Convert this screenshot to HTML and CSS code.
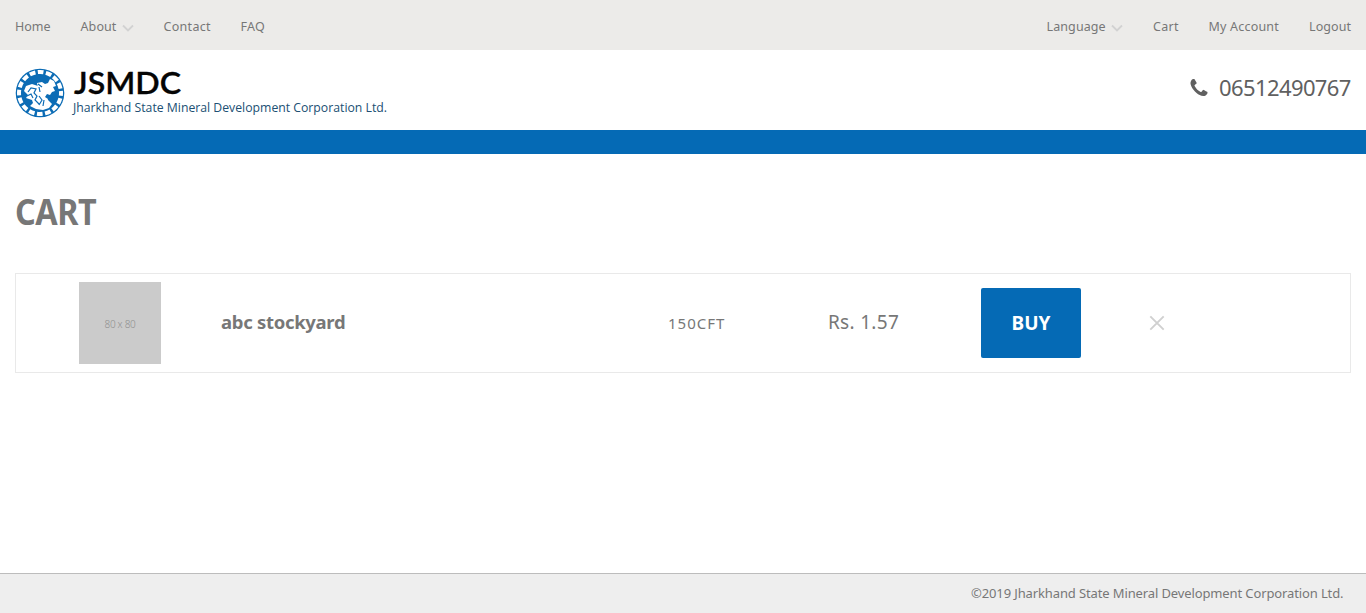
FILE: index.html
```html
<!DOCTYPE html>
<html lang="en">
<head>
<meta charset="utf-8">
<title>Cart - JSMDC</title>
<link rel="stylesheet" href="styles.css">
</head>
<body>
<nav class="topbar">
  <ul class="menu menu-left">
    <li><a class="t-home">Home</a></li>
    <li><a class="t-about">About</a><svg class="chevron" viewBox="0 0 12 8"><path d="M1 1.500 6 6.500 11 1.500"/></svg></li>
    <li><a class="t-contact">Contact</a></li>
    <li><a class="t-faq">FAQ</a></li>
  </ul>
  <ul class="menu menu-right">
    <li><a class="t-language">Language</a><svg class="chevron" viewBox="0 0 12 8"><path d="M1 1.500 6 6.500 11 1.500"/></svg></li>
    <li><a class="t-cart">Cart</a></li>
    <li><a class="t-account">My Account</a></li>
    <li><a class="t-logout">Logout</a></li>
  </ul>
</nav>
<header class="header">
  <svg class="logo" viewBox="0 0 380 60">
    <circle cx="25" cy="33" r="24.3" fill="#0c6cb5"/>
    <circle cx="25" cy="33" r="21" fill="none" stroke="#fff" stroke-width="4" stroke-dasharray="5.8 2.447" stroke-dashoffset="2.9"/>
    <path fill="#fff" d="M22 23l5-1 3 2 3-1 2-4 4 2 2 5-3 1 2 4-3 1-2 3-3-1-2 3 3 2-1 3-4-1-2-4-3-2-2-4 2-3z"/>
    <path fill="#fff" d="M9 31l2-5 6-2 6 2 3 5-1 4 3 3 5 2 4 4-3 4-6 2-7-1-6-3 3-3-1-3-6-2 2-3z"/>
    <path fill="none" stroke="#0c6cb5" stroke-width="1.200" d="M13 32l3-4 5 1-2 4 3 3-2 4 4 4M12 36l4-2 2 4M24 27l1 5M24 36l3 4-3 5M29 40l-1 6M23 24l4 3"/>
    <text class="brand" x="59" y="34" textLength="107" lengthAdjust="spacingAndGlyphs">JSMDC</text>
    <text class="tagline" x="58" y="52" textLength="314" lengthAdjust="spacingAndGlyphs">Jharkhand State Mineral Development Corporation Ltd.</text>
  </svg>
  <div class="phone">
    <svg class="phone-icon" viewBox="0 0 1408 1408"><path d="M1408 1112q0 27-10 70.500t-21 68.500q-21 50-122 106-94 51-186 51-27 0-52.500-3.500t-57.500-12.500-47.500-14.500-55.500-20.500-49-18q-98-35-175-83-128-79-264.500-215.500t-215.500-264.500q-48-77-83-175-3-9-18-49t-20.500-55.500-14.500-47.500-12.500-57.500-3.500-52.500q0-92 51-186 56-101 106-122 25-11 68.500-21t70.500-10q14 0 21 3 18 6 53 76 11 19 30 54t35 63.500 31 53.500q3 4 17.500 25t21.500 35.500 7 28.500q0 20-28.500 50t-62 55-62 53-28.500 46q0 9 5 22.500t8.500 20.500 14 24 11.500 19q76 137 174 235t235 174q2 1 19 11.500t24 14 20.500 8.500 22.500 5q18 0 46-28.500t53-62 55-62 50-28.500q14 0 28.500 7t35.500 21.500 25 17.500q25 15 53.500 31t63.500 35 54 30q70 35 76 53 3 7 3 21z"/></svg>
    <span class="phone-number">06512490767</span>
  </div>
</header>
<div class="stripe"></div>
<main class="content">
  <h1 class="title">CART</h1>
  <div class="cart-row">
    <div class="thumb"><span>80 x 80</span></div>
    <div class="name"><span>abc stockyard</span></div>
    <div class="quantity"><span>150CFT</span></div>
    <div class="price"><span>Rs. 1.57</span></div>
    <button class="buy">BUY</button>
    <svg class="remove" viewBox="0 0 16 16"><path d="M1.300 1.300 14.700 14.700M14.700 1.300 1.300 14.700"/></svg>
  </div>
</main>
<footer class="footer"><span>©2019 Jharkhand State Mineral Development Corporation Ltd.</span></footer>
</body>
</html>
```
FILE: styles.css
```css
* { box-sizing: border-box; }
body {
  margin: 0;
  height: 613px;
  display: flex;
  flex-direction: column;
  background: #fff;
  color: #777;
  font-family: "Noto Sans", "Open Sans", sans-serif;
  overflow: hidden;
}
.topbar {
  height: 50px;
  padding: 3px 15px 0;
  display: flex;
  justify-content: space-between;
  align-items: center;
  background: #ecebe9;
}
.menu {
  display: flex;
  gap: 30px;
  margin: 0;
  padding: 0;
  list-style: none;
  font-size: 12.5px;
  letter-spacing: 0.3px;
}
.menu li { display: flex; align-items: center; }
.menu a { white-space: nowrap; }
.t-home { width: 35.5px; letter-spacing: 0; }
.t-about { width: 36px; letter-spacing: 0.1px; }
.t-contact { width: 47px; }
.t-faq { width: 25px; }
.t-language { width: 59.5px; letter-spacing: 0.1px; }
.t-cart { width: 25.5px; }
.t-account { width: 70.5px; letter-spacing: 0.2px; }
.t-logout { width: 42px; letter-spacing: 0.1px; }
.chevron {
  width: 12px;
  height: 8px;
  margin: 3px 0 0 5px;
  fill: none;
  stroke: #d2d2d2;
  stroke-width: 1.8;
}
.header {
  height: 80px;
  padding: 10px 15px;
  display: flex;
  justify-content: space-between;
}
.logo { width: 380px; height: 60px; overflow: visible; }
.brand { font: 600 30px Lato, sans-serif; fill: #050505; stroke: #050505; stroke-width: 0.3; }
.tagline { font: 13px "Open Sans", sans-serif; fill: #204f73; }
.phone { display: flex; align-items: center; height: 56px; color: #606060; }
.phone-icon { width: 18px; height: 17px; margin: -1px 11px 0 0; fill: #606060; }
.phone-number { width: 132px; margin-top: -2px; font-size: 22px; letter-spacing: -0.6px; white-space: nowrap; }
.stripe { height: 24px; background: #056ab5; }
.content { flex: 1; padding: 33px 15px 0; }
.title {
  margin: 0 0 36px;
  height: 50px;
  line-height: 50px;
  font-size: 35px;
  font-weight: 700;
  letter-spacing: -0.5px;
  transform: scaleX(0.925);
  transform-origin: left;
  color: #777;
}
.cart-row {
  height: 100px;
  display: flex;
  align-items: center;
  border: 1px solid #e9e9e9;
  padding-left: 63px;
  white-space: nowrap;
}
.thumb {
  width: 82px;
  height: 82px;
  padding-top: 2px;
  display: flex;
  align-items: center;
  justify-content: center;
  background: #cbcbcb;
  color: #909090;
  font-size: 10px;
  font-weight: 300;
  letter-spacing: -0.3px;
}
.name { width: 447px; margin: -3px 0 0 60px; font-size: 18.5px; font-weight: 700; letter-spacing: -0.3px; }
.quantity { width: 160px; font-size: 15px; letter-spacing: 1px; }
.price { width: 153px; margin-top: -2px; font-size: 19px; letter-spacing: 0.3px; }
.buy {
  width: 100px;
  height: 70px;
  padding: 0;
  border: 0;
  border-radius: 2px;
  background: #056ab5;
  color: #fff;
  font: 700 19px "Noto Sans", sans-serif;
}
.remove { width: 16px; height: 16px; margin-left: 68px; fill: none; stroke: #d0d0d0; stroke-width: 1.9; }
.footer {
  height: 40px;
  padding: 0 0 2px 971px;
  display: flex;
  align-items: center;
  border-top: 1px solid #bcbcbc;
  background: #eee;
  font-size: 13px;
  letter-spacing: -0.12px;
  white-space: nowrap;
}
```
